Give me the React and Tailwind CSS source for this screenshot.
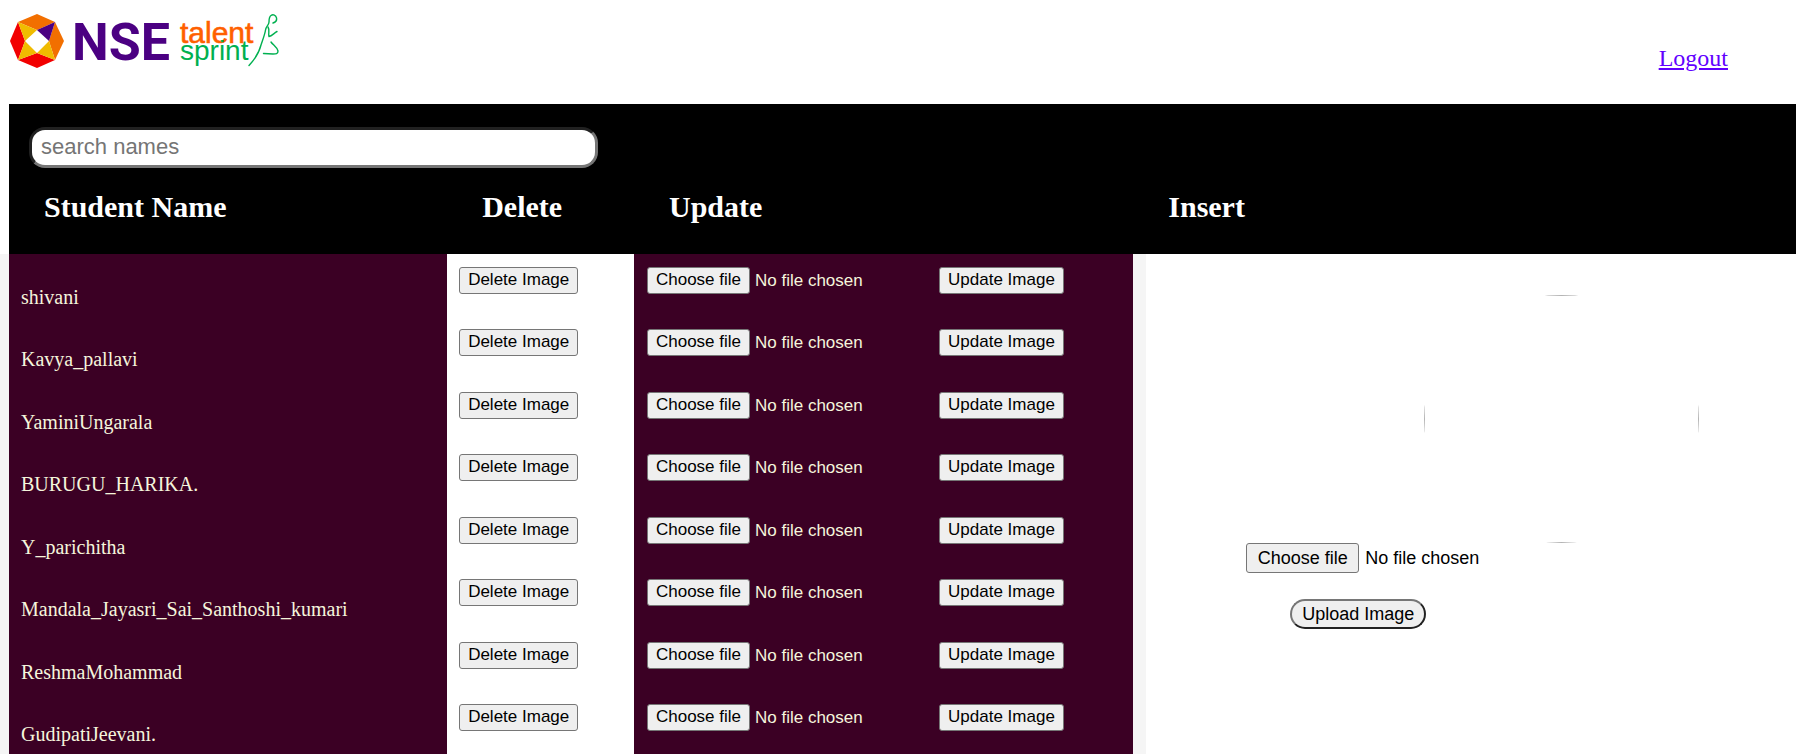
import { useState } from "react";

const STUDENTS = [
  "shivani",
  "Kavya_pallavi",
  "YaminiUngarala",
  "BURUGU_HARIKA.",
  "Y_parichitha",
  "Mandala_Jayasri_Sai_Santhoshi_kumari",
  "ReshmaMohammad",
  "GudipatiJeevani.",
];

const SANS = "font-['Liberation_Sans',Arial,sans-serif]";
const SERIF = "font-['Liberation_Serif','Times_New_Roman',serif]";

const smallButton =
  "h-[27px] rounded-[3px] border border-[#767676] bg-[#efefef] pb-[2px] text-[17px] leading-none text-black whitespace-nowrap";

function Logo() {
  return (
    <svg width="290" height="80" viewBox="0 0 290 80" role="img" aria-label="NSE talent sprint">
      <g>
        <path d="M18 22 37 14 55 22 37 30Z" fill="#f26f00" />
        <path d="M55 22 64 41 55 60 49 41Z" fill="#f26f00" />
        <path d="M18 22 10 41 18 60 25 41Z" fill="#f20000" />
        <path d="M18 60 37 68 55 60 37 53Z" fill="#f20000" />
        <path d="M18 22 37 30 25 41Z M18 60 37 53 25 41Z M55 60 49 41 37 53Z" fill="#f0bb00" />
        <path d="M55 22 37 30 49 41Z" fill="#4b0082" />
      </g>
      <text x="72" y="60" fill="#4b0082" className="font-['Roboto',sans-serif] text-[52px] font-bold">
        NSE
      </text>
      <text x="180" y="43" fill="#ff5f00" stroke="#ff5f00" strokeWidth="0.6" className={`${SANS} text-[30px]`}>
        talent
      </text>
      <text x="180" y="60" fill="#00b050" className={`${SANS} text-[28px]`}>
        sprint
      </text>
      <g fill="none" stroke="#00b050" strokeWidth="1.4" strokeLinecap="round" strokeLinejoin="round">
        <path d="M273 23C276 22 277 20 276.500 18C276 15 273 14 271 15.500C269 17 269 19 269 22C269 25 266 26 265.500 30C265 34 263 39 261 45C259 53 256 58 249 65.500" />
        <path d="M268 27C270 30 268 33 269 36.500C272 36 274 33 277 31.500" />
        <path d="M271 42C273 45 277 47 278 51C278 54 276 54 273 54L263.500 53.500" />
      </g>
    </svg>
  );
}

function FilePicker({ id, label, buttonClass, textClass }) {
  const [fileName, setFileName] = useState("No file chosen");
  return (
    <div className={`flex items-center ${SANS}`}>
      <input
        id={id}
        type="file"
        aria-label={label}
        className="peer sr-only"
        onChange={(e) => setFileName(e.target.files[0]?.name ?? "No file chosen")}
      />
      <label htmlFor={id} className={`flex shrink-0 items-center justify-center ${buttonClass}`}>
        Choose file
      </label>
      <span className={`whitespace-nowrap ${textClass}`}>{fileName}</span>
    </div>
  );
}

function InsertPanel() {
  return (
    <div className="flex flex-col items-start pt-[41px]">
      <div className="ml-[278px] h-[248px] w-[275px] overflow-hidden rounded-[50%]">
        <div className="size-full border border-[#b4b4b4]" />
      </div>
      <div className="ml-[100px]">
        <FilePicker
          id="insert-file"
          label="Image to upload"
          buttonClass="h-[30px] w-[113px] rounded-[3px] border border-[#767676] bg-[#efefef] pb-[1px] text-[18px] leading-none text-black"
          textClass="ml-[6px] pb-[1px] text-[18px] leading-none text-black"
        />
      </div>
      <button
        type="button"
        className={`mt-[26px] ml-[144px] h-[30px] w-[136px] rounded-full border-2 border-t-[#767676] border-r-[#222222] border-b-[#222222] border-l-[#767676] bg-[#efefef] pb-[1px] text-[18px] leading-none whitespace-nowrap text-black ${SANS}`}
      >
        Upload Image
      </button>
    </div>
  );
}

export default function App() {
  const [query, setQuery] = useState("");
  const rows = STUDENTS.filter((name) => name.toLowerCase().includes(query.toLowerCase()));
  const heading = "bg-black h-[86px] pl-[35px] pb-[8px] text-left align-middle text-[30px] leading-none font-bold text-white";

  return (
    <div className={`bg-white ${SERIF}`}>
      <header className="flex h-[104px] items-start justify-between pr-[68px]">
        <Logo />
        <a href="#logout" className="pt-[44px] text-[24px] leading-[28px] text-[#6200ff] underline">
          Logout
        </a>
      </header>

      <main>
        <div className="ml-[9px] bg-black px-[20px] pt-[23px]">
          <input
            type="search"
            aria-label="search names"
            placeholder="search names"
            value={query}
            onChange={(e) => setQuery(e.target.value)}
            className={`block h-[41px] w-[569px] max-w-full rounded-[16px] border-3 border-t-[#212121] border-r-[#767676] border-b-[#767676] border-l-[#212121] bg-white px-[9px] pb-[2px] text-[22px] text-black placeholder:text-[#757575] ${SANS}`}
          />
        </div>

        <table className="w-full table-fixed border-separate border-spacing-0">
          <colgroup>
            <col className="w-[24.9%]" />
            <col className="w-[10.4%]" />
            <col className="w-[27.8%]" />
            <col />
          </colgroup>
          <thead>
            <tr>
              <th scope="col" className={`border-l-[9px] border-white ${heading}`}>Student Name</th>
              <th scope="col" className={heading}>Delete</th>
              <th scope="col" className={heading}>Update</th>
              <th scope="col" className={heading}>Insert</th>
            </tr>
          </thead>
          <tbody>
            {rows.map((name, i) => (
              <tr key={name} className="h-[62px] even:h-[63px]">
                <td className="border-l-[9px] border-[#f5f5f5] bg-[#3b0024] pt-[31px] pl-[12px] align-top text-[20px] leading-[24px] text-[#f5f5dc]">
                  {name}
                </td>
                <td className="bg-white pt-[13px] pl-[12px] align-top">
                  <button type="button" className={`block w-[119px] ${smallButton} ${SANS}`}>
                    Delete Image
                  </button>
                </td>
                <td className="bg-[#3b0024] pt-[13px] pl-[13px] align-top">
                  <div className="flex items-center">
                    <div className="w-[292px]">
                      <FilePicker
                        id={`file-${name}`}
                        label={`New image for ${name}`}
                        buttonClass={`w-[103px] ${smallButton}`}
                        textClass="ml-[5px] text-[17px] leading-none text-[#f5f5dc]"
                      />
                    </div>
                    <button type="button" className={`w-[125px] ${smallButton} ${SANS}`}>
                      Update Image
                    </button>
                  </div>
                </td>
                {i === 0 && (
                  <td rowSpan={rows.length} className="border-l-[13px] border-[#f5f5f5] bg-white align-top">
                    <InsertPanel />
                  </td>
                )}
              </tr>
            ))}
          </tbody>
        </table>
      </main>
    </div>
  );
}
